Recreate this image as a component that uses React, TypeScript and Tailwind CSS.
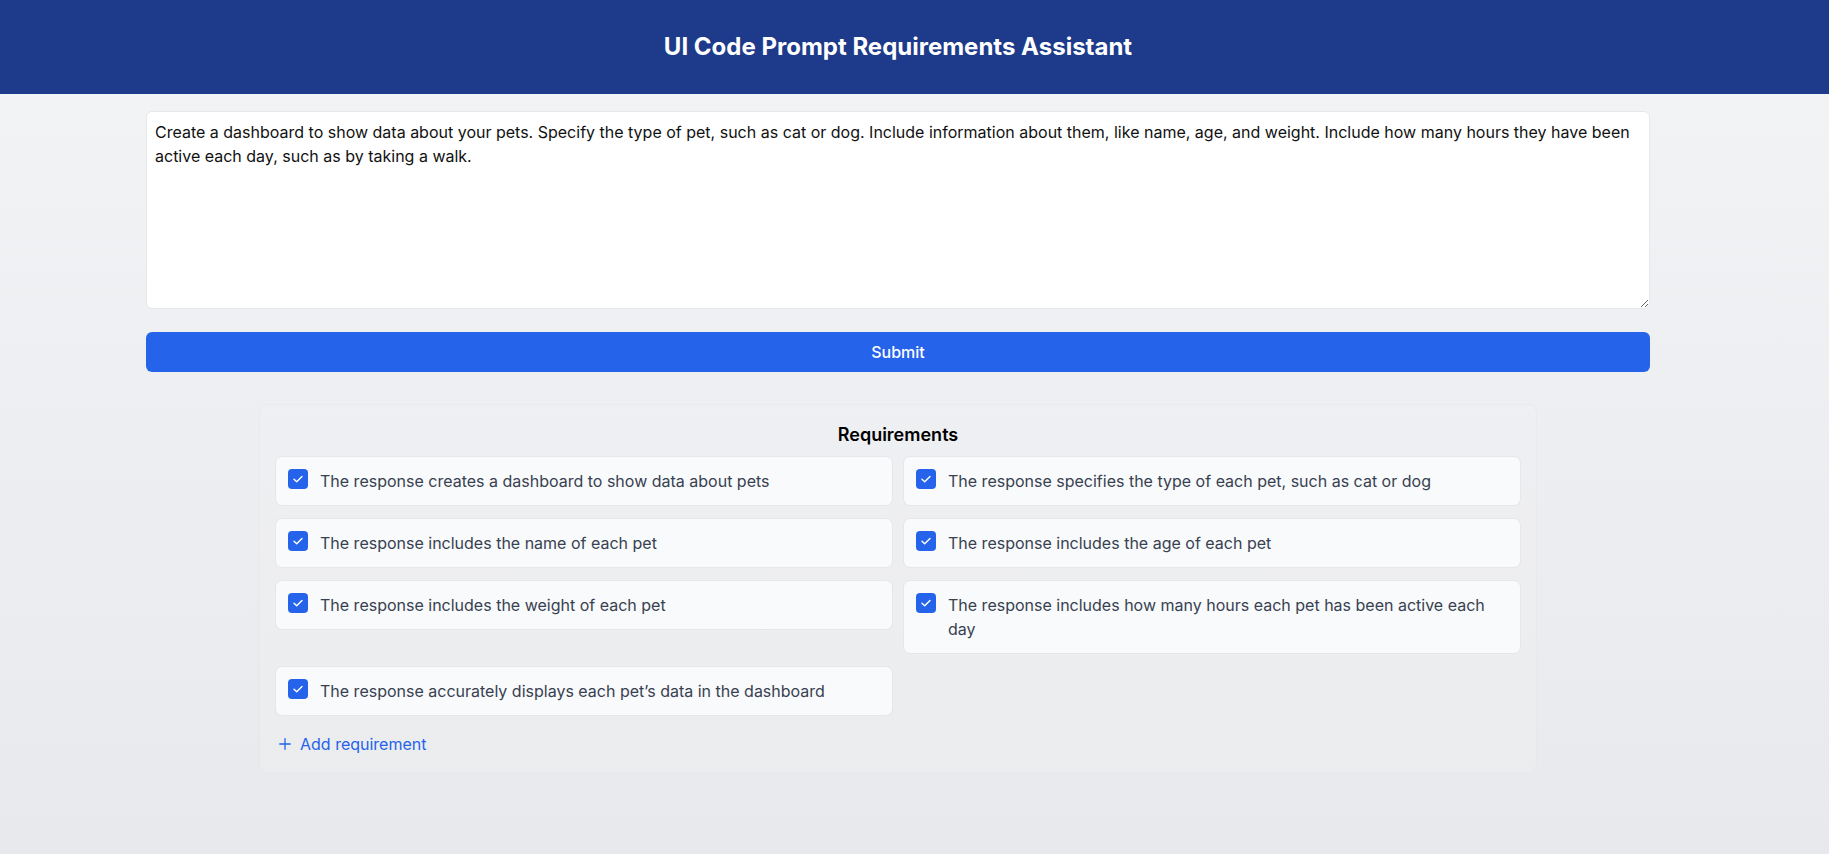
import { Plus } from 'lucide-react'

const requirements = [
  'The response creates a dashboard to show data about pets',
  'The response specifies the type of each pet, such as cat or dog',
  'The response includes the name of each pet',
  'The response includes the age of each pet',
  'The response includes the weight of each pet',
  'The response includes how many hours each pet has been active each day',
  'The response accurately displays each pet\u2019s data in the dashboard',
]

const prompt =
  'Create a dashboard to show data about your pets. Specify the type of pet, such as cat or dog. Include information about them, like name, age, and weight. Include how many hours they have been active each day, such as by taking a walk.'

function CheckBox() {
  return (
    <span className="flex h-5 w-5 shrink-0 items-center justify-center rounded-[4px] bg-[#2563eb]">
      <svg width="20" height="20" viewBox="0 0 20 20" fill="none">
        <polyline
          points="6,10.2 8.7,12.8 14,7.4"
          stroke="white"
          strokeWidth="1.4"
          strokeLinecap="round"
          strokeLinejoin="round"
        />
      </svg>
    </span>
  )
}

export default function App() {
  return (
    <div className="min-h-screen bg-gradient-to-b from-[#f3f4f6] to-[#e8e9ec] font-['Inter','Noto_Sans',sans-serif]">
      <header className="flex h-[94px] items-center bg-[#1e3a8a]">
        <div className="w-[1796px] text-center">
          <h1 className="text-2xl font-bold text-white">UI Code Prompt Requirements Assistant</h1>
        </div>
      </header>

      <main className="w-[1796px] px-[146px] pt-[17px] pb-16">
        <textarea
          defaultValue={prompt}
          className="block h-[198px] w-full rounded-md border border-[#e5e7eb] bg-white p-2 text-base leading-6 text-[#111] outline-none"
        />
        <button
          type="button"
          className="mt-[23px] h-10 w-full rounded-md bg-[#2563eb] text-base font-medium text-white"
        >
          Submit
        </button>

        <section className="mx-auto mt-8 w-[1278px] rounded-lg border border-[#e5e7eb]/70 bg-white/10 p-4">
          <h2 className="mb-2 text-center text-lg font-semibold text-black">Requirements</h2>
          <div className="grid grid-cols-2 items-start gap-x-3 gap-y-3.5">
            {requirements.map((req) => (
              <div
                key={req}
                className="flex items-start gap-3 rounded-md bg-[#f9fafb] p-3 ring-1 ring-[#e5e7eb]"
              >
                <CheckBox />
                <p className="text-base leading-6 text-[#374151]">{req}</p>
              </div>
            ))}
          </div>
          <button type="button" className="mt-[17px] flex items-center gap-1.5 text-base leading-6 text-[#2563eb]">
            <Plus size={18} strokeWidth={1.75} />
            Add requirement
          </button>
        </section>
      </main>
    </div>
  )
}
